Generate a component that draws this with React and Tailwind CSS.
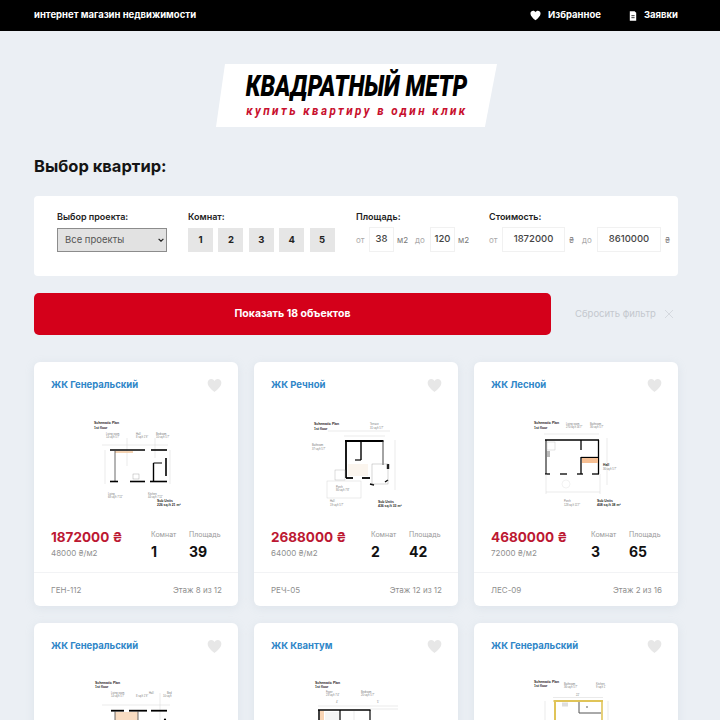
import React from "react";

const FONT = "font-['Inter','Liberation_Sans',sans-serif]";

function Heart({ className }) {
  return (
    <svg viewBox="0 0 24 24" className={className} fill="currentColor">
      <path d="M12 22.5 C9 19.5 1 14 1 7.5 C1 3.8 3.9 1.5 6.9 1.5 C9 1.5 11 2.7 12 4.8 C13 2.7 15 1.5 17.1 1.5 C20.1 1.5 23 3.8 23 7.5 C23 14 15 19.5 12 22.5 Z" />
    </svg>
  );
}

function Doc({ className }) {
  return (
    <svg viewBox="0 0 10 12" className={className}>
      <path d="M1 0 H7 L9 2 V12 H1 Z" fill="#fff" />
      <rect x="3" y="5" width="4" height="1.2" fill="#333" />
      <rect x="3" y="7.5" width="4" height="1.2" fill="#333" />
    </svg>
  );
}

const W = ({ x1, y1, x2, y2, w = 1.6, c = "#000" }) => (
  <line x1={x1} y1={y1} x2={x2} y2={y2} stroke={c} strokeWidth={w} />
);
const G = ({ x1, y1, x2, y2 }) => (
  <line x1={x1} y1={y1} x2={x2} y2={y2} stroke="#c9c9c9" strokeWidth="0.4" />
);
const T = ({ x, y, children, b }) => (
  <text x={x} y={y} fontSize={b ? 3.4 : 2.6} fontWeight={b ? 700 : 400} fill={b ? "#222" : "#777"} fontFamily="Liberation Sans, sans-serif">
    {children}
  </text>
);

function Plan1() {
  return (
    <>
      <T x={24} y={24} b>Schematic Plan</T>
      <T x={24} y={28.5} b>1st floor</T>
      <T x={36} y={35}>Living room</T>
      <T x={36} y={38}>14 sq.ft 5'7"</T>
      <T x={66} y={35}>Hall</T>
      <T x={66} y={38}>8 sq.ft 1'9"</T>
      <T x={86} y={35}>Bedroom</T>
      <T x={86} y={38}>10 sq.ft 5'7"</T>
      <G x1={32} y1={45} x2={98} y2={45} />
      <G x1={35} y1={50} x2={35} y2={84} />
      <G x1={100} y1={50} x2={100} y2={84} />
      <G x1={57} y1={38} x2={57} y2={66} />
      <G x1={85} y1={38} x2={85} y2={58} />
      <W x1={40} y1={50} x2={75} y2={50} />
      <W x1={45} y1={52} x2={63} y2={52} w={1.6} c="#f2c9a0" />
      <W x1={81} y1={50} x2={97} y2={50} />
      <W x1={45} y1={50} x2={45} y2={82} w={0.8} c="#444" />
      <W x1={40} y1={81.5} x2={48} y2={81.5} />
      <W x1={60} y1={81.5} x2={75} y2={81.5} />
      <W x1={80} y1={81.5} x2={97} y2={81.5} />
      <W x1={83.5} y1={63} x2={83.5} y2={82} w={1.4} />
      <W x1={83.5} y1={63} x2={92} y2={63} w={1} />
      <W x1={96} y1={58} x2={96} y2={76} w={1.6} />
      <rect x={63} y={74} width={6} height={5} fill="none" stroke="#999" strokeWidth="0.4" />
      <T x={38} y={95}>Living</T>
      <T x={38} y={98}>68 sq.ft 7'11"</T>
      <T x={78} y={95}>Kitchen</T>
      <T x={78} y={98}>44 sq.ft 7'11"</T>
      <T x={87} y={102} b>Sub Units</T>
      <T x={87} y={105.5} b>226 sq.ft 21 m²</T>
    </>
  );
}

function Plan2() {
  return (
    <>
      <T x={24} y={25} b>Schematic Plan</T>
      <T x={24} y={30} b>1st floor</T>
      <T x={80} y={25}>Terrace</T>
      <T x={80} y={29}>31 sq.ft 5'7"</T>
      <G x1={38} y1={31} x2={100} y2={31} />
      <G x1={54} y1={36} x2={95} y2={36} />
      <G x1={105} y1={40} x2={105} y2={90} />
      <T x={22} y={46}>Bathroom</T>
      <T x={22} y={50}>37 sq.ft 5'7"</T>
      <W x1={55} y1={41} x2={93.5} y2={41} w={1.8} />
      <W x1={56} y1={41} x2={56} y2={78} w={1.8} />
      <W x1={71} y1={41} x2={71} y2={60} w={1.4} />
      <W x1={65} y1={60} x2={71} y2={60} w={1.2} />
      <W x1={93} y1={41} x2={93} y2={65} w={0.9} c="#333" />
      <W x1={98} y1={64} x2={98} y2={69} w={2.4} />
      <W x1={56} y1={78} x2={63} y2={78} w={1.8} />
      <W x1={72} y1={78} x2={80} y2={78} w={1.8} />
      <W x1={80} y1={84} x2={84} y2={85} w={1.4} />
      <W x1={95} y1={82} x2={98} y2={80} w={1.4} />
      <rect x={82} y={64} width={16} height={20} fill="none" stroke="#999" strokeWidth="0.4" />
      <rect x={58} y={64} width={20} height={12} fill="#fbf5ee" />
      <rect x={45} y={70} width={10} height={10} fill="none" stroke="#aaa" strokeWidth="0.4" />
      <rect x={37} y={81} width={34} height={17} fill="none" stroke="#ccc" strokeWidth="0.4" />
      <T x={46} y={88}>Porch</T>
      <T x={46} y={91}>80 sq.ft 7'8"</T>
      <T x={40} y={102}>Hall</T>
      <T x={40} y={105.5}>19 sq.ft 5'7"</T>
      <T x={88} y={103} b>Sub Units</T>
      <T x={88} y={106.5} b>436 sq.ft 33 m²</T>
    </>
  );
}

function Plan3() {
  return (
    <>
      <T x={24} y={24} b>Schematic Plan</T>
      <T x={24} y={29} b>1st floor</T>
      <T x={56} y={25}>Living room</T>
      <T x={56} y={28}>270 sq.ft 16'7"</T>
      <T x={80} y={25}>Bathroom</T>
      <T x={80} y={28}>36 sq.ft 5'7"</T>
      <G x1={34} y1={34} x2={89} y2={34} />
      <G x1={97} y1={38} x2={97} y2={85} />
      <W x1={35} y1={40} x2={89} y2={40} w={1.3} />
      <W x1={36} y1={40} x2={36} y2={74} w={1} />
      <W x1={88.5} y1={40} x2={88.5} y2={74} w={1.3} />
      <W x1={71} y1={40} x2={71} y2={50} w={1.3} />
      <W x1={71} y1={57} x2={71} y2={74} w={1.3} />
      <W x1={71} y1={57.5} x2={89} y2={57.5} w={1.3} />
      <rect x={72} y={58} width={16} height={5} fill="#f6bf93" />
      <W x1={35} y1={74} x2={40} y2={74} w={1.3} />
      <W x1={50} y1={74} x2={57} y2={74} w={1.3} />
      <W x1={67} y1={74} x2={73} y2={74} w={1.3} />
      <W x1={82} y1={74} x2={89} y2={74} w={1.3} />
      <rect x={37} y={51} width={3} height={6} fill="#bbb" />
      <rect x={37} y={42} width={8} height={8} fill="none" stroke="#bbb" strokeWidth="0.4" />
      <G x1={36} y1={92} x2={90} y2={92} />
      <G x1={36} y1={74} x2={36} y2={94} />
      <G x1={90} y1={74} x2={90} y2={94} />
      <circle cx={56} cy={84} r={4} fill="none" stroke="#ddd" strokeWidth="0.4" />
      <T x={93} y={66} b>Hall</T>
      <T x={93} y={69.5}>36 sq.ft 5'7"</T>
      <T x={54} y={102}>Porch</T>
      <T x={54} y={105.5}>128 sq.ft 11'7"</T>
      <T x={87} y={102} b>Sub Units</T>
      <T x={87} y={105.5} b>408 sq.ft 38 m²</T>
    </>
  );
}

function Plan1b() {
  return (
    <>
      <T x={25} y={23} b>Schematic Plan</T>
      <T x={25} y={27} b>1st floor</T>
      <T x={41} y={33}>Living room</T>
      <T x={41} y={35.5}>14 sq.ft 5'7"</T>
      <T x={79} y={33}>Hall</T>
      <T x={66} y={35.5}>8 sq.ft 1'9"</T>
      <T x={97} y={33}>Bed</T>
      <T x={93} y={35.5}>10 sq.ft</T>
      <G x1={32} y1={44} x2={100} y2={44} />
      <G x1={90} y1={32} x2={90} y2={60} />
      <rect x={45} y={51} width={23} height={9} fill="#f8dcc2" />
      <W x1={41} y1={49.7} x2={54} y2={49.7} w={1.8} />
      <W x1={59} y1={49.7} x2={77} y2={49.7} w={1.8} />
      <W x1={81} y1={49.7} x2={97} y2={49.7} w={1.8} />
      <W x1={45} y1={50} x2={45} y2={60} w={0.8} c="#444" />
      <W x1={68} y1={50} x2={68} y2={60} w={0.8} c="#444" />
      <circle cx={95} cy={58.5} r={1.1} fill="#000" />
    </>
  );
}

function Plan4() {
  return (
    <>
      <T x={25} y={23} b>Schematic Plan</T>
      <T x={25} y={27} b>1st floor</T>
      <T x={36} y={32}>Foyer</T>
      <T x={36} y={35}>23 sq.ft 7'4"</T>
      <T x={71} y={32}>Bedroom</T>
      <T x={71} y={35}>20 sq.ft 5'7"</T>
      <T x={46} y={42}>4'</T>
      <T x={87} y={42}>5'</T>
      <G x1={28} y1={45} x2={108} y2={45} />
      <G x1={80} y1={48} x2={108} y2={48} />
      <rect x={30} y={50} width={4} height={10} fill="#f8d4b4" />
      <rect x={35} y={51} width={14} height={9} fill="#f4f4f4" />
      <W x1={28} y1={49} x2={80.5} y2={49} w={1.7} />
      <W x1={29} y1={49} x2={29} y2={60} w={1.5} />
      <W x1={50} y1={49} x2={50} y2={60} w={1.2} />
      <W x1={80} y1={49} x2={80} y2={60} w={1.2} />
      <G x1={64} y1={50} x2={64} y2={60} />
    </>
  );
}

function Plan5() {
  return (
    <>
      <T x={24} y={21.5} b>Schematic Plan</T>
      <T x={24} y={26} b>1st floor</T>
      <T x={54} y={24}>Bathroom</T>
      <T x={54} y={26.5}>36 sq.ft 5'7"</T>
      <T x={86} y={24}>Kitchen</T>
      <T x={86} y={26.5}>9 sq.ft 1'</T>
      <T x={66} y={35}>22'</T>
      <G x1={43} y1={36.5} x2={93} y2={36.5} />
      <G x1={35} y1={40} x2={35} y2={60} />
      <G x1={98} y1={40} x2={98} y2={60} />
      <rect x={52} y={41.5} width={6} height={4} fill="#dedede" />
      <W x1={43.5} y1={40} x2={93} y2={40} w={2} c="#e0c458" />
      <W x1={45} y1={40} x2={45} y2={60} w={2} c="#e0c458" />
      <W x1={92} y1={40} x2={92} y2={60} w={1.6} c="#e0c458" />
      <path d="M69 41 V52 H91" fill="none" stroke="#555" strokeWidth="1" />
      <circle cx={77} cy={46} r={0.7} fill="#222" />
    </>
  );
}

function Card({ title, price, perM, rooms, area, code, floor, plan }) {
  return (
    <div className="flex h-[244px] flex-col rounded-md bg-white shadow-[0_2px_10px_rgba(160,175,195,0.18)]">
      <div className="flex items-center justify-between pl-[17px] pr-[16px] pt-[15px]">
        <span className="text-[9.5px] font-bold leading-[16px] text-[#2f86c8]">{title}</span>
        <Heart className="h-[15px] w-[15px] text-[#e7e7e7]" />
      </div>
      <svg viewBox="0 0 130 110" className="ml-[36px] mt-[7px] h-[110px] w-[130px] shrink-0">
        {plan}
      </svg>
      {price && (
        <>
          <div className="flex flex-1 pl-[17px] pr-[16px] pt-[15px]">
            <div className="w-[100px]">
              <div className="pt-[2px] text-[13.5px] font-bold leading-[20px] text-[#bc1832]">{price} ₴</div>
              <div className="text-[8px] leading-[12px] text-[#8f8f8f]">{perM} ₴/м2</div>
            </div>
            <div className="w-[38px] pt-[4px]">
              <div className="text-[7px] leading-[12px] text-[#9a9a9a]">Комнат</div>
              <div className="mt-[2px] text-[14px] font-bold leading-[18px] text-[#111]">{rooms}</div>
            </div>
            <div className="pt-[4px]">
              <div className="text-[7px] leading-[12px] text-[#9a9a9a]">Площадь</div>
              <div className="mt-[2px] text-[14px] font-bold leading-[18px] text-[#111]">{area}</div>
            </div>
          </div>
          <div className="flex h-[34px] items-center justify-between border-t border-[#f2f3f5] pl-[17px] pr-[16px] text-[8px] text-[#8f8f8f]">
            <span>{code}</span>
            <span>{floor}</span>
          </div>
        </>
      )}
    </div>
  );
}

const cards = [
  { title: "ЖК Генеральский", price: "1872000", perM: "48000", rooms: "1", area: "39", code: "ГЕН-112", floor: "Этаж 8 из 12", plan: <Plan1 /> },
  { title: "ЖК Речной", price: "2688000", perM: "64000", rooms: "2", area: "42", code: "РЕЧ-05", floor: "Этаж 12 из 12", plan: <Plan2 /> },
  { title: "ЖК Лесной", price: "4680000", perM: "72000", rooms: "3", area: "65", code: "ЛЕС-09", floor: "Этаж 2 из 16", plan: <Plan3 /> },
  { title: "ЖК Генеральский", plan: <Plan1b /> },
  { title: "ЖК Квантум", plan: <Plan4 /> },
  { title: "ЖК Генеральский", plan: <Plan5 /> },
];

const Small = ({ children, className = "" }) => (
  <span className={`text-[8px] ${className}`}>{children}</span>
);
const Field = ({ value, className = "" }) => (
  <div className={`flex h-[25px] items-center justify-center border border-[#f1f1f1] text-[9.5px] font-medium text-[#444] ${className}`}>
    {value}
  </div>
);

export default function App() {
  return (
    <div className={`h-[720px] w-[720px] overflow-hidden bg-[#ebeff4] ${FONT}`}>
      <header className="flex h-[31px] items-center justify-between bg-black pl-[34px] pr-[42px] text-white">
        <span className="text-[9.5px] font-bold">интернет магазин недвижимости</span>
        <div className="flex items-center text-[9.5px] font-bold">
          <Heart className="mr-[7px] h-[11px] w-[11px] text-white" />
          <span>Избранное</span>
          <Doc className="ml-[28px] mr-[7px] h-[10px] w-[8px]" />
          <span>Заявки</span>
        </div>
      </header>

      <div className="ml-[216px] mt-[33px] flex h-[63px] w-[281px] flex-col items-center bg-white [clip-path:polygon(3.2%_0,100%_0,95.7%_100%,0_100%)]">
        <div className="mt-[7px] origin-center scale-x-[0.777] whitespace-nowrap font-['Roboto'] text-[30px] font-black italic leading-[30px] text-black">
          КВАДРАТНЫЙ МЕТР
        </div>
        <div className="mt-[2px] origin-center scale-x-[0.9] whitespace-nowrap font-['Roboto'] text-[13px] font-bold italic leading-[15px] tracking-[2.7px] text-[#c8102e]">
          купить квартиру в один клик
        </div>
      </div>

      <h1 className="ml-[34px] mt-[28px] text-[16.5px] font-bold leading-[22px] text-[#151515]">Выбор квартир:</h1>

      <section className="ml-[34px] mr-[42px] mt-[19px] flex h-[80px] rounded-sm bg-white pl-[23px] pt-[14px]">
        <div className="w-[131px]">
          <div className="text-[9px] font-semibold leading-[14px] text-[#222]">Выбор проекта:</div>
          <div className="relative mt-[4px] h-[24px] w-[110px]">
            <select defaultValue="all" className="block h-full w-full appearance-none border border-[#8c8c8c] bg-[#e2e2e2] pl-[7px] text-[9.5px] text-[#555]">
              <option value="all">Все проекты</option>
            </select>
            <svg viewBox="0 0 10 6" className="pointer-events-none absolute right-[3px] top-[10px] h-[4px] w-[6px]" fill="none" stroke="#222" strokeWidth="2">
              <path d="M1 1 L5 5 L9 1" />
            </svg>
          </div>
        </div>
        <div className="w-[168px]">
          <div className="text-[9px] font-semibold leading-[14px] text-[#222]">Комнат:</div>
          <div className="mt-[4px] flex gap-[5.4px]">
            {["1", "2", "3", "4", "5"].map((n) => (
              <div key={n} className="flex h-[24px] w-[25px] items-center justify-center bg-[#e6e6e6] text-[9.5px] font-bold text-[#222]">
                {n}
              </div>
            ))}
          </div>
        </div>
        <div className="w-[133px]">
          <div className="text-[9px] font-semibold leading-[14px] text-[#222]">Площадь:</div>
          <div className="mt-[3px] flex items-center">
            <Small className="w-[13px] text-[#a9a9a9]">от</Small>
            <Field value="38" className="w-[25px]" />
            <Small className="ml-[3px] w-[18px] text-[#777]">м2</Small>
            <Small className="w-[15px] text-[#a9a9a9]">до</Small>
            <Field value="120" className="w-[25px]" />
            <Small className="ml-[3px] text-[#777]">м2</Small>
          </div>
        </div>
        <div>
          <div className="text-[9px] font-semibold leading-[14px] text-[#222]">Стоимость:</div>
          <div className="mt-[3px] flex items-center">
            <Small className="w-[13px] text-[#a9a9a9]">от</Small>
            <Field value="1872000" className="w-[63px]" />
            <Small className="ml-[4px] w-[13px] text-[#777]">₴</Small>
            <Small className="w-[15px] text-[#a9a9a9]">до</Small>
            <Field value="8610000" className="w-[64px]" />
            <Small className="ml-[4px] text-[#777]">₴</Small>
          </div>
        </div>
      </section>

      <div className="ml-[34px] mr-[42px] mt-[17px] flex h-[42px] items-center">
        <div className="flex h-full w-[517px] items-center justify-center rounded-[5px] bg-[#d4001a] text-[10.5px] font-bold text-white">
          Показать 18 объектов
        </div>
        <span className="ml-[24px] text-[9.5px] text-[#c4c8ce]">Сбросить фильтр</span>
        <svg viewBox="0 0 10 10" className="ml-[8px] h-[10px] w-[10px]" stroke="#cfd3d9" strokeWidth="0.8">
          <line x1="1" y1="1" x2="9" y2="9" />
          <line x1="9" y1="1" x2="1" y2="9" />
        </svg>
      </div>

      <div className="ml-[34px] mr-[42px] mt-[27px] grid grid-cols-3 gap-x-[16px] gap-y-[17px]">
        {cards.map((c, i) => (
          <Card key={i} {...c} />
        ))}
      </div>
    </div>
  );
}
